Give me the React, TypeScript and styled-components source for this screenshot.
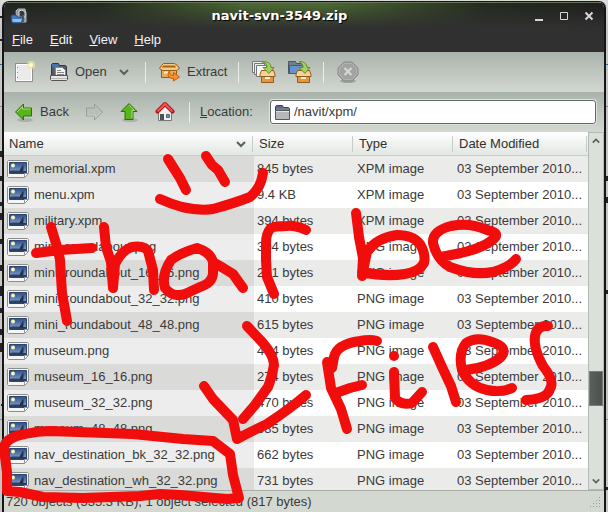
import React from "react";
import styled, { createGlobalStyle } from "styled-components";

const files: [string, string, string][] = [
  ["memorial.xpm", "845 bytes", "XPM"],
  ["menu.xpm", "9.4 KB", "XPM"],
  ["military.xpm", "394 bytes", "XPM"],
  ["mini_roundabout.png", "304 bytes", "PNG"],
  ["mini_roundabout_16_16.png", "241 bytes", "PNG"],
  ["mini_roundabout_32_32.png", "410 bytes", "PNG"],
  ["mini_roundabout_48_48.png", "615 bytes", "PNG"],
  ["museum.png", "404 bytes", "PNG"],
  ["museum_16_16.png", "274 bytes", "PNG"],
  ["museum_32_32.png", "470 bytes", "PNG"],
  ["museum_48_48.png", "685 bytes", "PNG"],
  ["nav_destination_bk_32_32.png", "662 bytes", "PNG"],
  ["nav_destination_wh_32_32.png", "731 bytes", "PNG"],
];

const strokes = [
  "M168 159L173 167L180 178L186 190",
  "M206 156L212 165L218 170L225 182",
  "M160 199Q171 204 182 207Q200 211 213 209Q235 203 250 197Q261 188 263 173",
  "M51 227L58 250L60 260L62 293L67 321",
  "M36 253L60 250L92 248",
  "M104 227L106 247L111 262L113 288L115 264Q122 250 132 247Q144 245 148 251L153 270L154 290",
  "M213 263Q212 253 197 248Q180 253 171 260Q161 275 165 288Q173 298 185 294L200 287Q212 283 213 274L213 262L220 266L233 274L243 288",
  "M306 230Q295 225 287 226Q273 226 270 229Q266 234 266 243L266 260L267 277L274 294",
  "M356 213L359 237L363 258L362 276L367 252Q376 238 397 235Q413 235 420 244Q426 254 424 263Q419 272 405 274Q385 277 362 272",
  "M441 257L461 253Q482 248 491 241Q503 233 487 230Q470 222 451 226Q432 231 433 243Q437 260 450 267Q474 276 493 272Q510 267 516 259",
  "M247 326L263 343Q274 356 274 365Q271 380 268 387L255 405L243 419",
  "M204 386L213 399L233 420L237 439Q254 430 267 424Q291 408 306 395",
  "M377 341Q370 339 360 341Q337 344 334 357L332 368L327 362L331 388L341 409L347 429",
  "M336 393L350 388L362 385",
  "M394 356L394 356",
  "M394 372L395 398Q401 406 412 403L422 392",
  "M433 347L442 367L451 386L456 402",
  "M466 370Q490 367 501 357Q509 347 492 342Q476 336 466 343Q458 353 462 370Q469 386 487 390Q502 393 512 388",
  "M548 326Q537 325 535 336Q533 348 543 366Q555 381 550 389Q547 399 526 400",
  "M4 449Q4 438 25 434Q38 431 50 431L133 434L183 439L213 441L230 454L233 475L239 498L227 499L180 495L160 494L140 496L83 498L43 497L20 492L7 491L7 472L4 449",
];

const Global = createGlobalStyle`
  * { box-sizing: border-box; }
  html, body, #root { height: 100%; margin: 0; }
  body { overflow: hidden; }
  body, button, input { font: 13px/16px "Liberation Sans", Arial, sans-serif; color: #3a3a3a; }
`;
const Desktop = styled.div`
  position: relative;
  height: 100%;
  padding: 1px 2px 0 2px;
  background:
    linear-gradient(#2f679c, #2f679c) 0 64px / 100% 1px no-repeat,
    linear-gradient(#8d8d8d, #8d8d8d) 0 106px / 100% 1px no-repeat,
    linear-gradient(#8d8d8d, #8d8d8d) 0 419px / 100% 1px no-repeat,
    linear-gradient(#dcdcdc, #c6c6c6 30px);
`;
const Win = styled.main`
  position: relative;
  height: 100%;
  display: flex;
  flex-direction: column;
  overflow: hidden;
  border: 1px solid #161616;
  border-width: 1px 2px 0 2px;
  border-radius: 7px 7px 0 0;
  background: #d3d8d1;
`;
const TitleBar = styled.header`
  height: 26px;
  flex: none;
  display: grid;
  grid-template-columns: 32px 1fr 80px;
  align-items: center;
  padding: 0 7px 0 6px;
  border-top: 1px solid #66745a;
  background: linear-gradient(transparent, #303030), linear-gradient(90deg, #20231d, #242b1f 16%, #4c6a32 40%, #4c6a32 54%, #242b1f 80%, #1d1e1c);
`;
const Title = styled.h1`
  margin: 0;
  text-align: center;
  font: bold 13px/18px "DejaVu Sans", sans-serif;
  color: #fff;
  text-shadow: 1px 1px 1px #000;
`;
const Controls = styled.div`
  display: flex;
  justify-content: flex-end;
  gap: 9px;
`;
const Plain = styled.button`
  border: 0;
  padding: 0;
  background: none;
  display: flex;
  align-items: center;
  flex: none;
  &:disabled { color: #9aa19a; }
`;
const MenuBar = styled.nav`
  height: 24px;
  flex: none;
  display: flex;
  align-items: center;
  gap: 17px;
  padding: 0 8px;
  background: #303030;
`;
const MenuItem = styled(Plain)`color: #f2f2f2;`;
const ToolBar = styled.div`
  height: 40px;
  flex: none;
  display: flex;
  align-items: center;
  padding: 0 8px 0 10px;
  background: linear-gradient(#a9b3ab, #d3d8d1);
`;
const Tool = styled(Plain)<{ $w: number }>`
  width: ${(p) => p.$w}px;
  gap: 6px;
`;
const Divider = styled.span<{ $gap: number }>`
  width: 1px;
  height: 21px;
  margin-right: ${(p) => p.$gap}px;
  background: #e9ece8;
`;
const LocLabel = styled.label`
  width: 70px;
  flex: none;
`;
const LocBox = styled.div`
  flex: 1;
  min-width: 0;
  height: 24px;
  display: flex;
  align-items: center;
  gap: 3px;
  padding-left: 3px;
  background: #fff;
  border: 1px solid #5f6963;
  border-radius: 3px;
  box-shadow: 0 0 0 1px #dfe3de;
`;
const LocInput = styled.input`
  flex: 1;
  min-width: 0;
  border: 0;
  padding: 0;
  outline: 0;
  background: none;
`;
const Content = styled.section`
  flex: 1;
  min-height: 0;
  display: flex;
  border-bottom: 1px solid #aab0a9;
`;
const ListPane = styled.div`
  flex: 1;
  min-width: 0;
  overflow: hidden;
  background: #fff;
`;
const Table = styled.table`
  width: 100%;
  border-collapse: collapse;
  table-layout: fixed;
`;
const Col = styled.col<{ $w?: number }>`
  width: ${(p) => (p.$w ? p.$w + "px" : "auto")};
`;
const Th = styled.th`
  height: 24px;
  padding: 0 5px;
  text-align: left;
  font-weight: normal;
  color: #303030;
  background: linear-gradient(90deg, #c6cec8, #c6cec8) right 1px center / 1px 16px no-repeat, linear-gradient(#fff, #e0e6e1);
  box-shadow: inset 0 -1px #c8d0ca;
`;
const HeadRow = styled.div`
  display: flex;
  justify-content: space-between;
  align-items: center;
  padding-right: 3px;
`;
const Row = styled.tr`
  background: #fff;
  &:nth-child(odd) { background: #ebebea; }
  td:first-child { background: #ededed; }
  &:nth-child(odd) td:first-child { background: #dadad9; }
`;
const Td = styled.td`
  height: 26px;
  padding: 0 0 0 3px;
  white-space: nowrap;
  overflow: hidden;
`;
const NameCell = styled.div`
  display: flex;
  align-items: center;
  gap: 5px;
`;
const ScrollBar = styled.div`
  width: 16px;
  flex: none;
  display: flex;
  flex-direction: column;
  align-items: center;
  background: #dbe0db;
  border: 1px solid #b3bab4;
`;
const ScrollButton = styled(Plain)`
  height: 16px;
  justify-content: center;
`;
const Track = styled.div`
  flex: 1;
  width: 100%;
  display: grid;
  grid-template-rows: 222fr 35fr 67fr;
`;
const Thumb = styled.div`
  grid-row: 2;
  background: linear-gradient(90deg, #5a605c, #4b514d);
  border: 1px solid #767d78;
`;
const Status = styled.footer`
  height: 21px;
  flex: none;
  display: flex;
  justify-content: space-between;
  align-items: center;
  padding: 0 2px;
  background: #d3d8d1;
  white-space: nowrap;
`;
const Paint = styled.svg`
  position: absolute;
  left: 0;
  top: 0;
  pointer-events: none;
`;

const Chevron = ({ up = false, s = 10 }) => (
  <svg width={s} height={s} viewBox="0 0 10 10" fill="none" stroke="#59605b" strokeWidth="2">
    <path d={up ? "M1 7l4-4 4 4" : "M1 3l4 4 4-4"} />
  </svg>
);
const AppIcon = () => (
  <svg width="18" height="18" viewBox="0 0 18 18">
    <path d="M6 4l2-2h7l1 4v9H7z" fill="#8d9292" stroke="#b7bbbb" />
    <path d="M9 7V4l3-1 3 2v5H9z" fill="#34393b" stroke="#dadddd" />
    <path d="M13 8v7" stroke="#555b5d" strokeWidth="2" />
    <path d="M2 8h4l1 2h6l-2 6H2L1 10z" fill="#4179b8" stroke="#234f82" />
    <path d="M2 12h10l-1 3H3z" fill="#8fbbe8" />
  </svg>
);
const NewIcon = () => (
  <svg width="22" height="22" viewBox="0 0 22 22">
    <rect x="1.5" y="2.5" width="17" height="18" fill="#eaeaea" stroke="#8f918d" />
    <path d="M2.5 3.5h15v16h-15z" fill="none" stroke="#fff" />
    <path d="M3.500 6v1m0 4v1m0 4v1" stroke="#888" />
    <circle cx="17" cy="4" r="4" fill="#f3eb8f" opacity=".7" />
    <circle cx="17" cy="4" r="2" fill="#fffbd2" />
  </svg>
);
const OpenIcon = () => (
  <svg width="20" height="20" viewBox="0 0 20 20">
    <path d="M2.5 15V2.500l1-1h6l1 2h6l1 1V15z" fill="#565c68" stroke="#343840" />
    <path d="M3 2h6l1 3H3z" fill="#4974b0" />
    <path d="M6.5 5.500h7l3 3V14h-10z" fill="#f3f3f3" stroke="#888" />
    <path d="M8 8.500h4m-4 2h7m-7 2h7" stroke="#888" />
    <path d="M1.500 13.500h17v4l-1 1h-15l-1-1z" fill="#e6e6e4" stroke="#555" />
    <path d="M2 16.500h16" stroke="#b5b5b2" />
  </svg>
);
const ExtractIcon = () => (
  <svg width="23" height="20" viewBox="0 0 23 20">
    <path d="M3.500 7.500h15v8h-15z" fill="#e9ac5a" stroke="#985b12" />
    <path d="M5.500 1.500h11l3 2 2 3-3 2h-14l-3-2 2-3z" fill="#f5c987" stroke="#985b12" />
    <path d="M5 3.500h12l1 2H4z" fill="#a96517" />
    <path d="M6 10.500h6" stroke="#fff0cf" strokeWidth="2" />
    <path d="M11.500 8.500c0 4 1 5 4 5v-3l6 4.500-6 4v-2.500c-5 0-7-3-4-8z" fill="#fb922b" stroke="#c35b00" />
  </svg>
);
const AddIcon = ({ folder = false }) => (
  <svg width="25" height="24" viewBox="0 0 25 24">
    {folder ? (
      <>
        <path d="M1.500 13.500v-12h7l1 2h8v10z" fill="#777d88" stroke="#4b5565" />
        <path d="M2.500 5.500h15v8h-15z" fill="#6594cb" stroke="#365e94" />
      </>
    ) : (
      <>
        <path d="M1.500 1.500h10v11h-10z" fill="#eee" stroke="#777" />
        <path d="M3.500 3.500h10v11h-10z" fill="#eee" stroke="#777" />
        <path d="M5.500 5.500h10v11h-10z" fill="#f8f8f8" stroke="#777" />
      </>
    )}
    <path d="M10.500 10.500h12l1.500 4v2h-15v-2z" fill="#f4d3a0" stroke="#985b12" />
    <path d="M10.500 16.500h12v6h-12z" fill="#db9a48" stroke="#985b12" />
    <path d="M14 18h5" stroke="#fff0cf" strokeWidth="2" />
    <path d="M12 1.500c5 0 8 2 8 6h3l-5 6-6-6h4c0-3-1-4-4-6z" fill="#a4cf62" stroke="#5f8f28" />
  </svg>
);
const StopIcon = () => (
  <svg width="22" height="22" viewBox="0 0 22 22">
    <ellipse cx="11" cy="20" rx="8" ry="2" fill="#9ea49e" />
    <path d="M7 1h8l6 6v7l-6 6H7l-6-6V7z" fill="#a0a39f" stroke="#888c88" />
    <path d="M7.5 2.500h7l5 5v6l-5 5h-7l-5-5v-6z" fill="none" stroke="#b1b4b0" />
    <path d="M7.500 7l7 7m0-7l-7 7" stroke="#d7d9d6" strokeWidth="2" />
  </svg>
);
const Arrow = ({ dir }: { dir: "left" | "right" | "up" }) => {
  const off = dir === "right";
  const turn = dir === "left" ? 0 : dir === "right" ? 180 : 90;
  return (
    <svg width="20" height="20" viewBox="0 0 20 20">
      <ellipse cx="11" cy="18" rx="8" ry="2" fill="#7f887f" opacity={off ? "0" : ".4"} />
      <g transform={`rotate(${turn} 10 10)`}>
        <path d="M1.500 10l8-8v4h8v8h-8v4z" fill={off ? "#b8bfb8" : "#58b51c"} stroke={off ? "#989f98" : "#2b7005"} />
        <path d="M3 10l5.500-5.500V7h8" fill="none" stroke={off ? "#c9cfc9" : "#a5dd79"} />
      </g>
    </svg>
  );
};
const HomeIcon = () => (
  <svg width="20" height="22" viewBox="0 0 20 22">
    <path d="M3.500 10l6.500-6 6.500 6v9.500h-13z" fill="#eee" stroke="#777" />
    <path d="M5 13h4v6H5z" fill="#4b4f51" />
    <path d="M11.500 13.500h3v3h-3z" fill="#6f91b8" stroke="#566" />
    <path d="M2.500 10.500L10 3l7.500 7.500" fill="none" stroke="#b01317" strokeWidth="4" strokeLinejoin="round" strokeLinecap="round" />
    <path d="M2.500 10.500L10 3l7.500 7.500" fill="none" stroke="#f05359" strokeWidth="2" />
  </svg>
);
const FolderIcon = () => (
  <svg width="17" height="17" viewBox="0 0 17 17">
    <path d="M1.500 14V2.500l1-1h6l1 2h5l1 1V14z" fill="#777d84" stroke="#3f444b" />
    <path d="M2 2h6l1 2H2z" fill="#5c64a0" />
    <path d="M1.500 6.500h14v9h-14z" fill="#b5b9ba" stroke="#555a5d" />
    <path d="M2 7.500h13" stroke="#e1e3e3" />
  </svg>
);
const ImageIcon = () => (
  <svg width="22" height="18" viewBox="0 0 22 18">
    <defs>
      <linearGradient id="sky" x1="0" y1="0" x2="0" y2="1">
        <stop offset="0" stopColor="#2f4f86" />
        <stop offset="1" stopColor="#8eacd6" />
      </linearGradient>
    </defs>
    <path d="M1.500.5h19l1 1v12l-4 4h-16l-1-1v-15z" fill="#f5f5f3" stroke="#8a8c88" />
    <path d="M2.500 2.500h17v11h-17z" fill="url(#sky)" stroke="#2c4574" />
    <path d="M3 11c5-1 10 0 16 0v2H3z" fill="#2b4067" />
    <circle cx="6" cy="5.500" r="2" fill="#f4f2bd" />
    <path d="M13 10.500l3-5v5zm-1 1h6" fill="#263146" stroke="#263146" />
    <path d="M17.5 17v-3.500H21" fill="#fff" stroke="#999" />
  </svg>
);
const Grip = () => (
  <svg width="13" height="13" viewBox="0 0 13 13" stroke="#969e96" strokeDasharray="1 2">
    <path d="M1 11.500h11M4 8.500h8M7 5.500h5M10 2.500h2" />
  </svg>
);

export default function App() {
  return (
    <Desktop>
      <Global />
      <Paint width="608" height="512" viewBox="0 0 608 512" stroke="#222" strokeWidth="2">
        <path d="M0 17h2M0 40h2M1 151v6M1 176v5M1 202v4M1 213v7M1 239v5M1 265v6M1 286v10M1 308v5M1 329v6M1 343v9M1 405h2M607 176v5M607 197v6M607 290v4M607 487v3" />
      </Paint>
      <Win>
        <TitleBar>
          <AppIcon />
          <Title>navit-svn-3549.zip</Title>
          <Controls>
            {["M4 12h8", "M4.5 4.500h7v7h-7z", "M4.5 4.500l7 7m0-7l-7 7"].map((d, i) => (
              <Plain key={d} aria-label={["Minimize", "Maximize", "Close"][i]}>
                <svg width="16" height="16" viewBox="0 0 16 16" fill="none" stroke="#d5d8d3" strokeWidth={i === 1 ? 1 : 2}><path d={d} /></svg>
              </Plain>
            ))}
          </Controls>
        </TitleBar>
        <MenuBar>
          {["File", "Edit", "View", "Help"].map((m) => (
            <MenuItem key={m}><span><u>{m[0]}</u>{m.slice(1)}</span></MenuItem>
          ))}
        </MenuBar>
        <ToolBar>
          <Tool $w={35} aria-label="New"><NewIcon /></Tool>
          <Tool $w={70}><OpenIcon />Open</Tool>
          <Tool $w={26} aria-label="Recent archives"><Chevron /></Tool>
          <Divider $gap={12} />
          <Tool $w={80}><ExtractIcon />Extract</Tool>
          <Divider $gap={12} />
          <Tool $w={36} aria-label="Add files"><AddIcon /></Tool>
          <Tool $w={36} aria-label="Add folder"><AddIcon folder /></Tool>
          <Divider $gap={13} />
          <Tool $w={22} aria-label="Stop" disabled><StopIcon /></Tool>
        </ToolBar>
        <ToolBar>
          <Tool $w={70}><Arrow dir="left" />Back</Tool>
          <Tool $w={35} aria-label="Forward" disabled><Arrow dir="right" /></Tool>
          <Tool $w={36} aria-label="Up"><Arrow dir="up" /></Tool>
          <Tool $w={34} aria-label="Home"><HomeIcon /></Tool>
          <Divider $gap={10} />
          <LocLabel htmlFor="location"><u>L</u>ocation:</LocLabel>
          <LocBox><FolderIcon /><LocInput id="location" defaultValue="/navit/xpm/" /></LocBox>
        </ToolBar>
        <Content>
          <ListPane>
            <Table>
              <colgroup><Col $w={250} /><Col $w={100} /><Col $w={100} /><Col /></colgroup>
              <thead>
                <tr>
                  <Th><HeadRow>Name<Chevron /></HeadRow></Th>
                  <Th>Size</Th><Th>Type</Th><Th>Date Modified</Th>
                </tr>
              </thead>
              <tbody>
                {files.map(([name, size, type]) => (
                  <Row key={name}>
                    <Td><NameCell><ImageIcon />{name}</NameCell></Td>
                    <Td>{size}</Td>
                    <Td>{type} image</Td>
                    <Td>03 September 2010...</Td>
                  </Row>
                ))}
              </tbody>
            </Table>
          </ListPane>
          <ScrollBar>
            <ScrollButton aria-label="Scroll up"><Chevron up s={8} /></ScrollButton>
            <Track><Thumb /></Track>
            <ScrollButton aria-label="Scroll down"><Chevron s={8} /></ScrollButton>
          </ScrollBar>
        </Content>
        <Status>
          <span>720 objects (535.3 KB), 1 object selected (817 bytes)</span>
          <Grip />
        </Status>
      </Win>
      <Paint width="608" height="512" viewBox="0 0 608 512" fill="none" stroke="#f20d0d" strokeWidth="10" strokeLinecap="round" strokeLinejoin="round">
        {strokes.map((d) => <path key={d} d={d} />)}
      </Paint>
    </Desktop>
  );
}
